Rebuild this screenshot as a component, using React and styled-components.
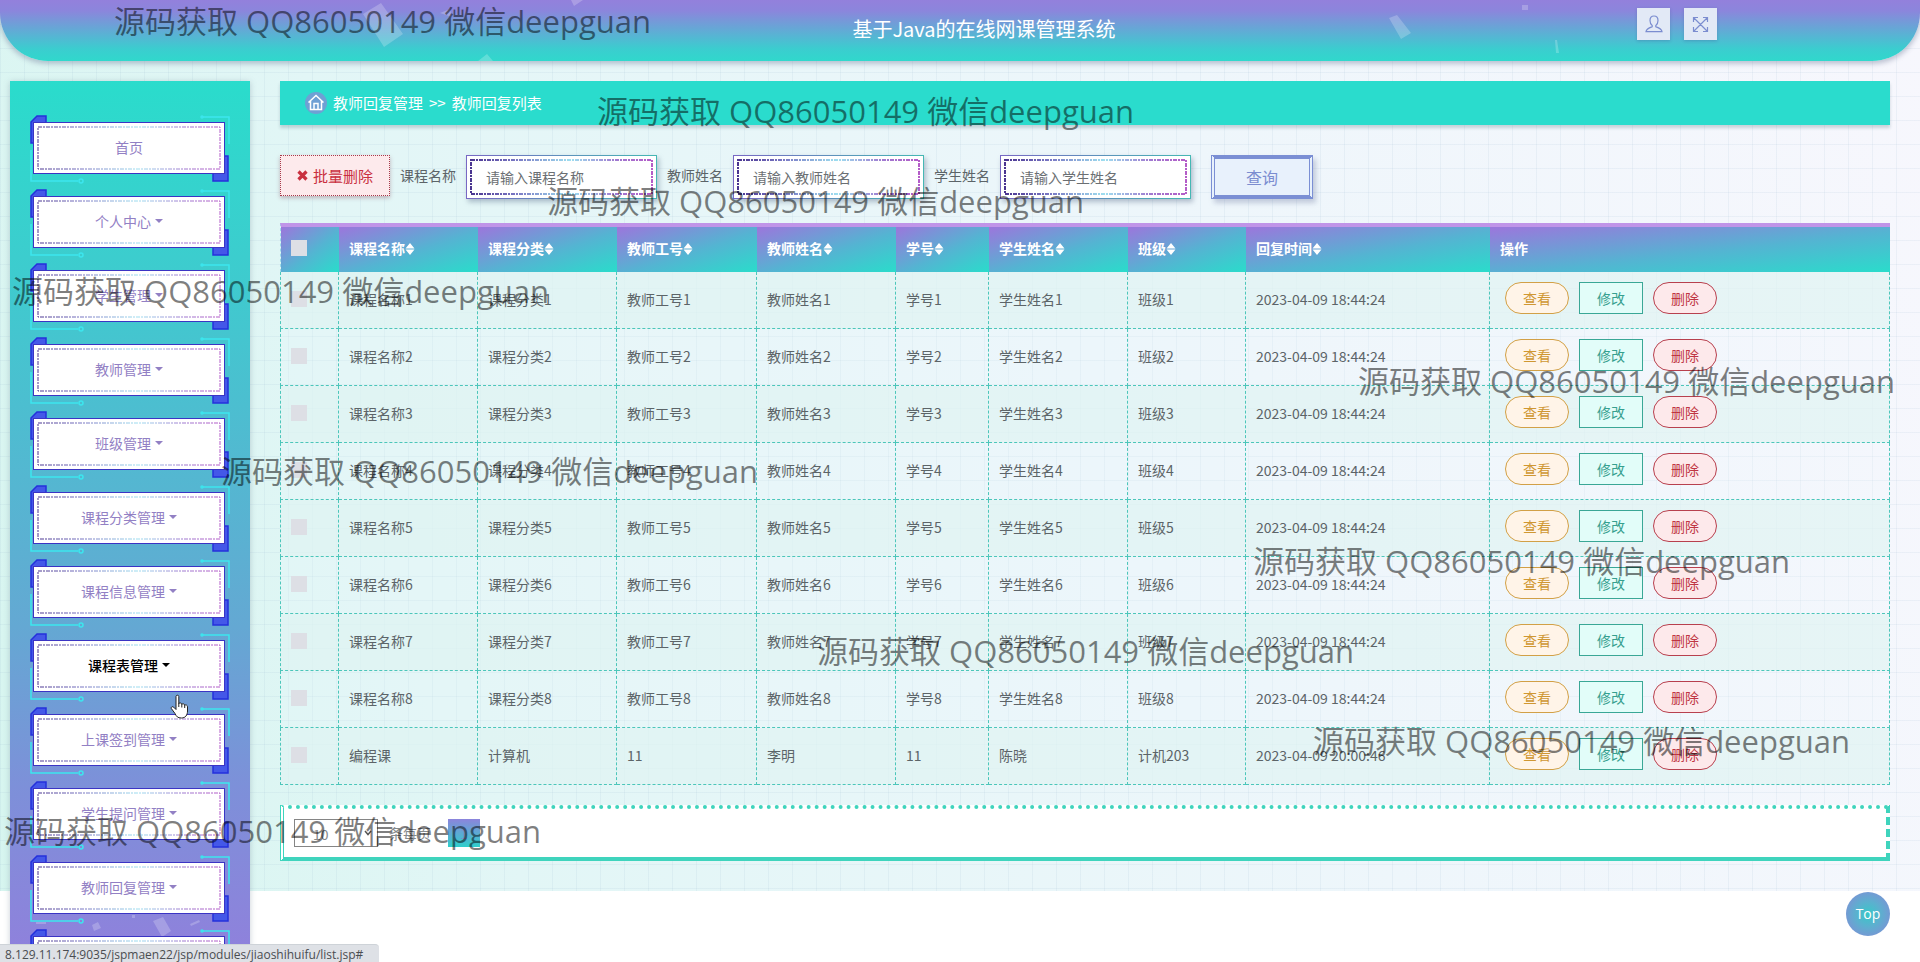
import React from 'react';
import styled, { createGlobalStyle, css } from 'styled-components';

const GlobalStyle = createGlobalStyle`
  * { box-sizing: border-box; }
  body {
    margin: 0;
    overflow: hidden;
    color: #5c6468;
    font: 14px/20px "Noto Sans CJK SC", "Noto Sans", sans-serif;
  }
  button, input, select { font: inherit; margin: 0; }
  button { cursor: pointer; }
`;

const Page = styled.div`
  position: relative;
  display: flex;
  flex-direction: column;
  height: 100vh;
  padding-bottom: 71px;
  overflow: hidden;
  background:
    repeating-linear-gradient(90deg, rgba(150, 180, 205, 0.12) 0 1px, transparent 1px 24px),
    repeating-linear-gradient(180deg, rgba(150, 180, 205, 0.12) 0 1px, transparent 1px 24px),
    linear-gradient(75deg, #d6f5ef 0%, #e2f6f6 25%, #eef6fb 65%, #f7f7fd 100%);
  background-clip: content-box;
`;

const Header = styled.header`
  position: relative;
  flex: none;
  display: flex;
  align-items: center;
  height: 61px;
  padding-left: 48px;
  border-radius: 0 0 48px 48px;
  overflow: hidden;
  background: linear-gradient(180deg, #9380dc 0%, #8b86dc 18%, #3bcdcf 80%, #30d8cc 100%);
`;

const HeaderShadow = styled.div`
  flex: none;
  border-radius: 0 0 48px 48px;
  box-shadow: 0 2px 5px 1px rgba(120, 130, 160, 0.45);
`;

const Confetti = styled.svg`
  position: absolute;
  inset: 0;
  fill: rgba(255, 255, 255, 0.22);
`;

const Title = styled.h1`
  flex: 1;
  margin: 0;
  padding-bottom: 4px;
  color: #fff;
  font-size: 20px;
  line-height: 28px;
  font-weight: 400;
  text-align: center;
`;

const HeaderActions = styled.div`
  position: absolute;
  top: 8px;
  right: 203px;
  display: flex;
  gap: 14px;
`;

const IconButton = styled.button`
  display: grid;
  place-items: center;
  width: 33px;
  height: 32px;
  padding: 0;
  border: 0;
  background: #e2e9f6;
  box-shadow: 0 1px 3px rgba(60, 80, 140, 0.3);
`;

const Body = styled.div`
  flex: 1;
  display: flex;
  gap: 30px;
  min-height: 0;
  padding: 20px 30px 0 10px;
`;

const Sidebar = styled.nav`
  position: relative;
  flex: none;
  display: flex;
  flex-direction: column;
  gap: 7px;
  width: 240px;
  margin-bottom: -71px;
  padding: 34px 20px 0;
  overflow: hidden;
  background: linear-gradient(180deg, #2adccc 0%, #3ccdce 20%, #64a8d3 62%, #7d90d9 80%, #9080dc 100%);
  box-shadow: 0 1px 6px rgba(100, 120, 140, 0.35);
`;

const NavItem = styled.div`
  position: relative;
  flex: none;
  height: 67px;
  padding: 7px 5px 8px 3px;
`;

const NavFrame = styled.svg`
  position: absolute;
  top: 0;
  left: 0;
`;

const NavButton = styled.button`
  position: relative;
  display: flex;
  align-items: center;
  justify-content: center;
  gap: 4px;
  width: 100%;
  height: 52px;
  padding: 0 0 2px;
  border: 1px solid #3b34c4;
  background: #fff;
  color: ${(p) => (p.$active ? '#000' : '#9280c4')};
  font-weight: ${(p) => (p.$active ? 500 : 400)};
`;

const Caret = styled.i`
  border: 4px solid transparent;
  border-top-color: currentColor;
  border-bottom: 0;
`;

const Dashes = styled.svg`
  position: absolute;
  top: 4px;
  left: 4px;
  width: calc(100% - 8px);
  height: calc(100% - 8px);
  overflow: visible;
  pointer-events: none;
`;

const Main = styled.main`
  flex: 1;
  min-width: 0;
`;

const Breadcrumb = styled.div`
  display: flex;
  align-items: center;
  gap: 6px;
  height: 44px;
  margin-bottom: 30px;
  padding-left: 25px;
  background: #2adccd;
  box-shadow: 0 3px 3px rgba(100, 130, 140, 0.3);
  color: #fff;
  font-size: 15px;
`;

const Filters = styled.form`
  display: flex;
  height: 44px;
  margin-bottom: 24px;
`;

const DeleteAll = styled.button`
  display: flex;
  align-items: center;
  justify-content: center;
  gap: 5px;
  width: 110px;
  height: 41px;
  margin-right: 10px;
  padding: 0;
  border: 1px dotted #a83a4a;
  background: #fdeaec;
  box-shadow: 0 2px 4px rgba(120, 60, 80, 0.35);
  color: #c9303f;
  font-size: 15px;
`;

const Field = styled.label`
  display: flex;
  gap: 10px;
  margin-right: 10px;
  line-height: 40px;
`;

const InputBox = styled.span`
  position: relative;
  width: 191px;
  height: 44px;
  background: #fff;
  border: 1px solid;
  border-image: linear-gradient(90deg, #7868c4, #45b8b4) 1;
  box-shadow: 2px 3px 5px rgba(80, 100, 130, 0.4);
`;

const Input = styled.input`
  display: block;
  width: 100%;
  height: 42px;
  padding: 0 19px;
  border: 0;
  background: transparent;
  &::placeholder { color: #6b6f73; opacity: 1; }
`;

const Query = styled.button`
  width: 102px;
  height: 44px;
  margin-left: 10px;
  padding: 0;
  border: 4px solid #7b8fd4;
  border-left-style: double;
  border-right-style: double;
  background: #e8f1fc;
  box-shadow: 3px 4px 5px rgba(110, 120, 160, 0.35);
  color: #7b8dd0;
  font-size: 16px;
`;

const Table = styled.table`
  width: 100%;
  margin-bottom: 20px;
  table-layout: fixed;
  border-collapse: separate;
  border-spacing: 0;
`;

const Th = styled.th`
  height: 49px;
  padding: 0 10px 4px;
  border-top: 4px solid #c094e8;
  background: linear-gradient(to bottom right, #9c76dc 0%, #54b4d2 55%, #2adccb 100%);
  background-clip: padding-box;
  color: #fff;
  font-weight: 700;
  text-align: left;
  white-space: nowrap;
  &:first-child { border-left: 1px dashed #9adbe8; }
`;

const Row = styled.tr`
  background: ${(p) => (p.$tinted ? 'rgba(224, 243, 242, 0.7)' : 'rgba(240, 248, 255, 0.2)')};
`;

const Td = styled.td`
  height: 57px;
  padding: ${(p) => (p.$actions ? '10px 15px 14px' : '0 10px 2px')};
  border: 0 dashed #4cc6ba;
  border-width: 0 1px 1px 0;
  white-space: nowrap;
  &:first-child { border-left-width: 1px; }
`;

const Check = styled.input`
  appearance: none;
  display: block;
  width: 16px;
  height: 16px;
  background: #dddfe5;
`;

const Actions = styled.div`
  display: flex;
  gap: 10px;
`;

const tones = {
  view: css`border-color: #d2a046; background: #fff4e8; color: #cf9732; border-radius: 16px;`,
  edit: css`border-color: #3aa796; background: #e2fdf9; color: #36a08f;`,
  remove: css`border-color: #b8404e; background: #fde9eb; color: #bf3543; border-radius: 16px;`,
};

const RowButton = styled.button`
  width: 64px;
  height: 32px;
  padding: 0;
  border: 1px solid;
  ${(p) => tones[p.$tone]}
`;

const Pager = styled.div`
  display: flex;
  height: 56px;
  padding: 10px;
  border: 4px solid #3fd4bd;
  border-top-style: dotted;
  border-right-style: dashed;
  border-left-style: double;
  background: #fff;
  line-height: 28px;
`;

const PageSize = styled.label`
  display: flex;
  gap: 11px;
  margin-right: 17px;
  color: #85898c;
`;

const SelectBox = styled.span`
  position: relative;
  width: 84px;
  height: 28px;
  svg { position: absolute; right: 6px; top: 11px; pointer-events: none; }
`;

const Select = styled.select`
  appearance: none;
  width: 100%;
  height: 28px;
  padding: 0 18px;
  border: 1px solid #858585;
  border-radius: 0;
  background: #fff;
  color: #85898c;
`;

const PageButton = styled.button`
  width: 32px;
  height: 28px;
  padding: 0;
  border: 0;
  background: linear-gradient(180deg, #8c84dc, #2fcfcb);
  color: #7b8dd0;
`;

const TopLink = styled.a`
  position: absolute;
  right: 30px;
  bottom: 26px;
  width: 44px;
  border-radius: 22px;
  background: radial-gradient(circle, #38c8c8 0%, #5cb0cf 40%, #7797d4 75%);
  color: #fff;
  font: 500 14px/44px "Open Sans", sans-serif;
  text-align: center;
  text-decoration: none;
`;

const StatusBar = styled.div`
  position: absolute;
  left: 0;
  bottom: 0;
  width: 379px;
  height: 18px;
  padding-left: 5px;
  border-top: 1px solid #ced3d8;
  border-radius: 0 4px 0 0;
  background: #dee1e6;
  color: #4a4d51;
  font: 12px/20px "Open Sans", sans-serif;
  white-space: nowrap;
  overflow: hidden;
`;

const Watermark = styled.span`
  position: absolute;
  left: ${(p) => p.$x}px;
  top: ${(p) => p.$y}px;
  color: rgba(0, 0, 0, 0.5);
  font: 31px/40px "Open Sans", "Noto Sans CJK SC", sans-serif;
  white-space: nowrap;
  pointer-events: none;
`;

const Pointer = styled.svg`
  position: absolute;
  left: 170px;
  top: 694px;
`;

const menu = [
  '首页', '个人中心', '学生管理', '教师管理', '班级管理', '课程分类管理', '课程信息管理',
  '课程表管理', '上课签到管理', '学生提问管理', '教师回复管理', '',
];

const columns = [
  ['课程名称', 139], ['课程分类', 139], ['教师工号', 140], ['教师姓名', 139],
  ['学号', 93], ['学生姓名', 139], ['班级', 118], ['回复时间', 244],
];

const rows = [1, 2, 3, 4, 5, 6, 7, 8].map((n) => [
  `课程名称${n}`, `课程分类${n}`, `教师工号${n}`, `教师姓名${n}`,
  `学号${n}`, `学生姓名${n}`, `班级${n}`, '2023-04-09 18:44:24',
]);
rows.push(['编程课', '计算机', '11', '李明', '11', '陈晓', '计机203', '2023-04-09 20:00:46']);

const watermarks = [
  [114, 1], [597, 91], [547, 181], [12, 271], [1358, 361],
  [221, 451], [1253, 541], [817, 631], [1313, 721], [4, 811],
];

function DashedFrame({ id, thick = 1 }) {
  return (
    <Dashes aria-hidden="true">
      <defs>
        <linearGradient id={id}>
          <stop offset="0" stopColor="#4a3490" />
          <stop offset="0.25" stopColor="#7a78c4" />
          <stop offset="0.55" stopColor="#9fdff0" />
          <stop offset="0.8" stopColor="#a07ad0" />
          <stop offset="1" stopColor="#b45cc8" />
        </linearGradient>
      </defs>
      <rect width="100%" height="100%" fill="none" stroke={`url(#${id})`} strokeWidth={thick} strokeDasharray="4 1 2 1" />
    </Dashes>
  );
}

function MenuEntry({ label, index }) {
  return (
    <NavItem>
      <NavFrame width="200" height="70" aria-hidden="true">
        <path d="M1 28V7L7 1H16V28Z M183 41H198V66H183Z" fill="#4458e8" stroke="#2430dc" strokeWidth="1.5" />
        <g fill="none" stroke="#3ce6ee" strokeWidth="1.5">
          <path d="M173 2H199V29" />
          <path d="M1 35V66H48" />
          <circle cx="51" cy="66" r="2" />
          <circle cx="172" cy="2" r="1" />
        </g>
      </NavFrame>
      <NavButton type="button" $active={label === '课程表管理'}>
        {label}
        {index > 0 && label && <Caret />}
        <DashedFrame id={`nav-dash-${index}`} />
      </NavButton>
    </NavItem>
  );
}

function SearchField({ label, id }) {
  return (
    <Field>
      {label}
      <InputBox>
        <Input type="text" placeholder={`请输入${label}`} />
        <DashedFrame id={id} thick={2} />
      </InputBox>
    </Field>
  );
}

const SortGlyph = styled.svg`
  vertical-align: -1px;
`;

function SortIcon() {
  return (
    <SortGlyph width="10" height="12" viewBox="0 0 10 12" fill="#fff" aria-hidden="true">
      <path d="M5 0L9.5 5.5H.5ZM5 12L.5 6.5H9.5Z" />
    </SortGlyph>
  );
}

export default function App() {
  return (
    <Page>
      <GlobalStyle />
      <HeaderShadow>
        <Header>
          <Confetti width="100%" height="61" aria-hidden="true">
            <path d="M381 3L403 34L384 47L363 14Z M571 0H583L574 6Z M478 61L487 54L493 61Z M1389 18L1397 15L1411 33L1401 39Z M1522 5H1528V10H1522Z M1555 40H1557L1559 53H1556Z M440 13L450 9L452 17Z" />
          </Confetti>
          <Title>基于Java的在线网课管理系统</Title>
          <HeaderActions>
            <IconButton type="button" aria-label="个人">
              <svg width="18" height="18" viewBox="0 0 18 18" fill="none" stroke="#7b8dd0" strokeWidth="1.2">
                <path d="M7.2 10.6C5.7 9.5 5 7.7 5 5.5C5 2.8 6.5 1 9 1S13 2.8 13 5.5C13 7.7 12.3 9.5 10.8 10.6V11.8C13.5 12.7 16.6 13.6 17 16.6H1C1.4 13.6 4.5 12.7 7.2 11.8Z" />
              </svg>
            </IconButton>
            <IconButton type="button" aria-label="全屏">
              <svg width="17" height="17" viewBox="0 0 17 17" fill="none" stroke="#7b8dd0" strokeWidth="1.2">
                <path d="M2 2L15 15M15 2L2 15M1.5 6V1.5H6M11 1.5H15.5V6M15.5 11V15.5H11M6 15.5H1.5V11" />
              </svg>
            </IconButton>
          </HeaderActions>
        </Header>
      </HeaderShadow>

      <Body>
        <Sidebar>
          <Confetti width="240" height="100%" aria-hidden="true">
            <path d="M143 840L153 836L161 850L152 856Z M82 844L88 841L91 847L84 850Z M180 843L189 839L190 841L181 845Z M122 834H125V837H122Z M26 841H36V843H26Z" />
          </Confetti>
          {menu.map((label, i) => <MenuEntry key={i} label={label} index={i} />)}
        </Sidebar>

        <Main>
          <Breadcrumb>
            <svg width="22" height="22" viewBox="0 0 22 22" fill="none" aria-hidden="true">
              <circle cx="11" cy="11" r="11" fill="#6fa0d4" />
              <path d="M3.5 10.5L11 3.5L18.5 10.5M5.5 9V17.5H16.5V9M9 17.5V11.5H13V17.5" stroke="#fff" strokeWidth="1.5" />
            </svg>
            <span>教师回复管理</span>
            <span>&gt;&gt;</span>
            <span>教师回复列表</span>
          </Breadcrumb>

          <Filters>
            <DeleteAll type="button">
              <svg width="11" height="11" viewBox="0 0 11 11" stroke="#c9303f" strokeWidth="3.2" aria-hidden="true">
                <path d="M1.5 1.5L9.5 9.5M9.5 1.5L1.5 9.5" />
              </svg>
              批量删除
            </DeleteAll>
            <SearchField label="课程名称" id="f-course" />
            <SearchField label="教师姓名" id="f-teacher" />
            <SearchField label="学生姓名" id="f-student" />
            <Query type="button">查询</Query>
          </Filters>

          <Table>
            <colgroup>
              <col width="59" />
              {columns.map(([name, width]) => <col key={name} width={width} />)}
              <col />
            </colgroup>
            <thead>
              <tr>
                <Th><Check type="checkbox" aria-label="全选" /></Th>
                {columns.map(([name]) => <Th key={name}>{name}<SortIcon /></Th>)}
                <Th>操作</Th>
              </tr>
            </thead>
            <tbody>
              {rows.map((row, r) => (
                <Row key={r} $tinted={r % 2 === 0}>
                  <Td><Check type="checkbox" aria-label={row[0]} /></Td>
                  {row.map((cell, c) => <Td key={c}>{cell}</Td>)}
                  <Td $actions>
                    <Actions>
                      <RowButton type="button" $tone="view">查看</RowButton>
                      <RowButton type="button" $tone="edit">修改</RowButton>
                      <RowButton type="button" $tone="remove">删除</RowButton>
                    </Actions>
                  </Td>
                </Row>
              ))}
            </tbody>
          </Table>

          <Pager>
            <PageSize>
              <SelectBox>
                <Select defaultValue="10"><option>10</option></Select>
                <svg width="8" height="6" viewBox="0 0 8 6" fill="none" stroke="#555" strokeWidth="1.5" aria-hidden="true"><path d="M1 1L4 4.5L7 1" /></svg>
              </SelectBox>
              条每页
            </PageSize>
            <PageButton type="button">1</PageButton>
          </Pager>
        </Main>
      </Body>

      <TopLink href="#top">Top</TopLink>
      <Pointer width="20" height="26" viewBox="0 0 20 26" aria-hidden="true">
        <path d="M6 2.5C6 .8 8.8 .8 8.8 2.5V9.5C9.5 8.6 11.6 8.9 11.8 10.2C12.8 9.4 14.5 9.8 14.7 11.1C15.8 10.5 17.5 11 17.5 12.8V17C17.5 21 15.5 24 11.5 24C7.5 24 6.5 22.5 5 19.5L1.3 14.5C.8 12.9 2.6 12.1 3.7 13.2L6 15.5Z" fill="#fff" stroke="#222" />
        <path d="M8.8 9V13M11.8 10V13.5M14.7 11V14" stroke="#222" />
      </Pointer>
      <StatusBar>8.129.11.174:9035/jspmaen22/jsp/modules/jiaoshihuifu/list.jsp#</StatusBar>
      {watermarks.map(([x, y]) => (
        <Watermark key={y} $x={x} $y={y}>源码获取 QQ86050149 微信deepguan</Watermark>
      ))}
    </Page>
  );
}
